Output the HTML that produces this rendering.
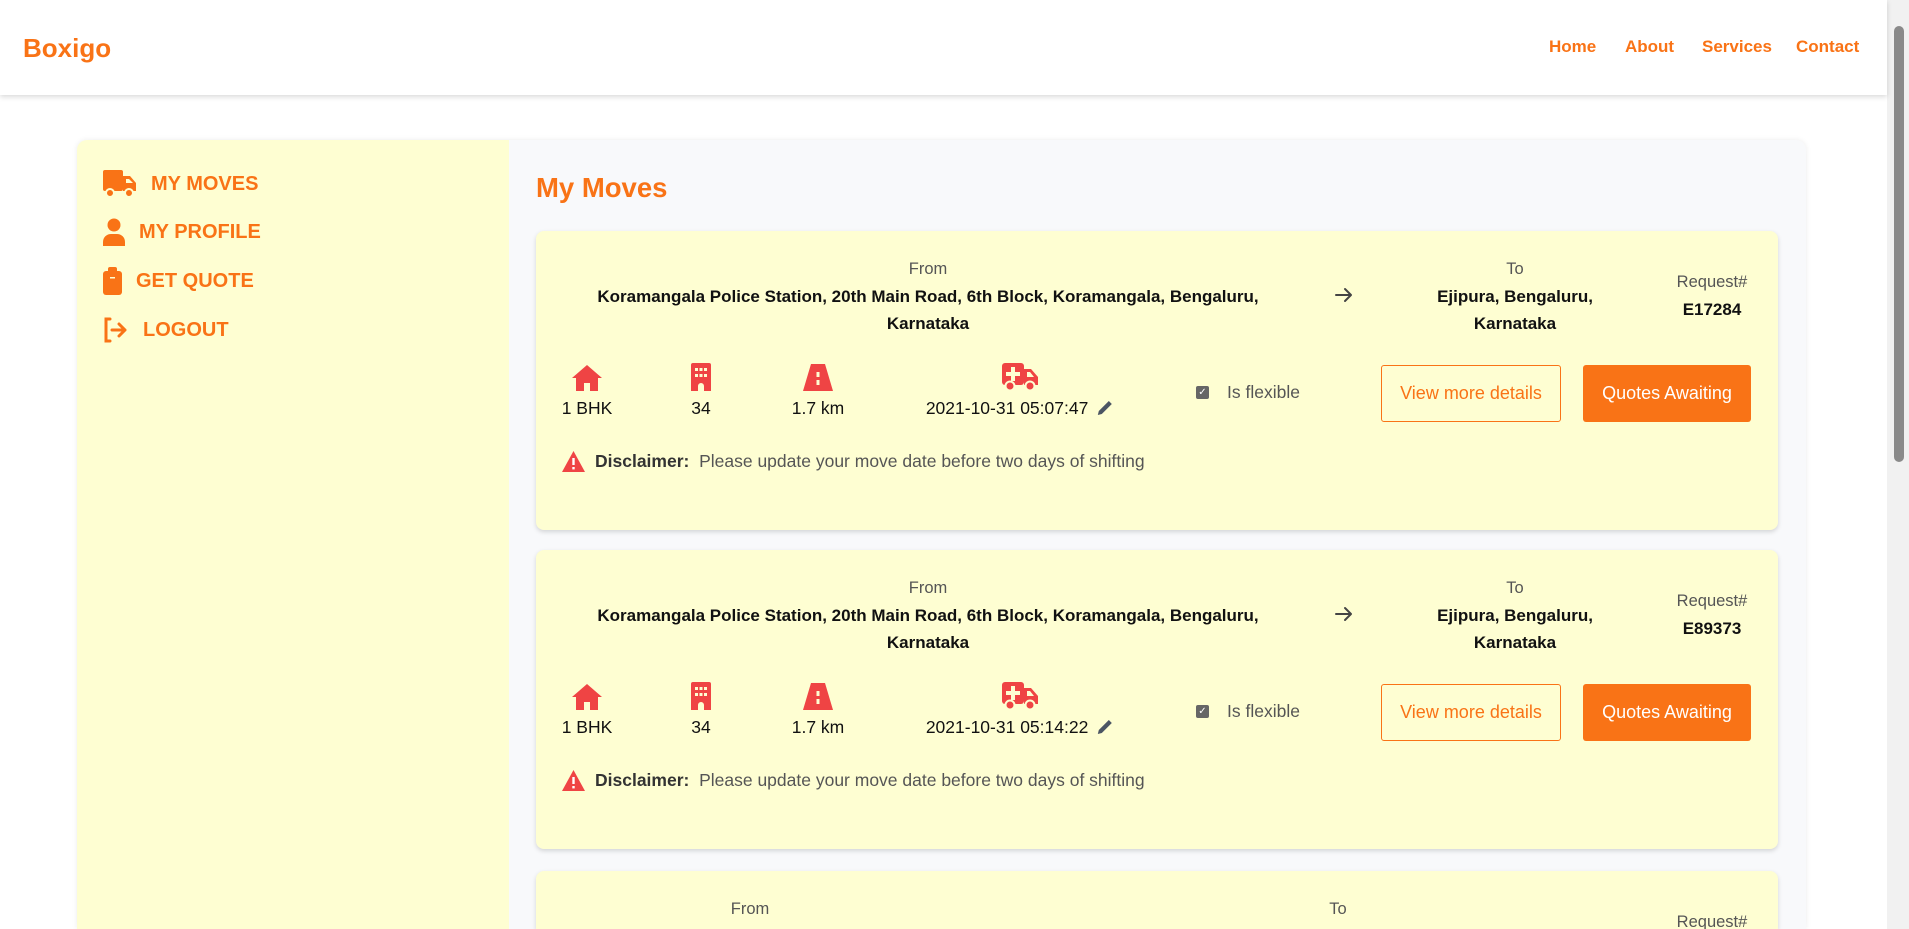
<!DOCTYPE html>
<html style="overflow:hidden;height:929px"><head><meta charset="utf-8"><style>
*{margin:0;padding:0;box-sizing:border-box}
body{width:1909px;height:929px;overflow:hidden;background:#fff;font-family:"Liberation Sans",sans-serif;position:relative}
.hdr{position:absolute;left:0;top:0;width:1887px;height:95px;background:#fff;box-shadow:0 2px 5px rgba(0,0,0,.15);z-index:2}
.logo{position:absolute;left:23px;top:33px;font-size:26px;font-weight:bold;color:#f97316}
.nav a{position:absolute;top:37px;font-size:17px;font-weight:bold;color:#f97316;text-decoration:none}
.sb{position:absolute;right:0;top:0;width:22px;height:929px;background:#f1f1f1}
.thumb{position:absolute;right:5px;top:26px;width:10px;height:436px;background:#8a8a8a;border-radius:5px}
.wrap{position:absolute;left:77px;top:140px;width:1729px;height:789px;background:#f8f9fb;border-radius:10px 10px 0 0;box-shadow:0 0 6px rgba(0,0,0,.08)}
.side{position:absolute;left:77px;top:140px;width:432px;height:789px;background:#fefed2;border-radius:10px 0 0 0}
.si{position:absolute;left:103px;font-size:20px;font-weight:bold;color:#f97316;display:flex;align-items:center}
.title{position:absolute;left:536px;top:172px;font-size:27.5px;font-weight:bold;color:#f97316}
.card{position:absolute;left:536px;width:1242px;height:299px;background:#fefed2;border-radius:8px;box-shadow:0 2px 5px rgba(0,0,0,.15);overflow:hidden}
.c{position:absolute;text-align:center;transform:translateX(-50%);white-space:nowrap}
.lab{font-size:16.5px;color:#555}
.b{font-size:17px;font-weight:bold;color:#111;line-height:27px}
.ic{position:absolute;transform:translateX(-50%)}
.val{font-size:17.5px;color:#111}
.btn{position:absolute;top:134px;height:57px;border-radius:3px;font-size:18px;display:flex;align-items:center;justify-content:center}
</style></head><body>
<div class="hdr"><div class="logo">Boxigo</div>
<div class="nav"><a style="left:1549px">Home</a><a style="left:1625px">About</a><a style="left:1702px">Services</a><a style="left:1796px">Contact</a></div></div>
<div class="wrap"></div>
<div class="side"></div>
<div class="si" style="top:170px"><svg width="34" height="28" viewBox="0 0 34 28"><rect x="0" y="0" width="20" height="21" rx="2" fill="#f97316"/><path d="M20 6h7l6 7v8H20z" fill="#f97316"/><path d="M23 9h3l4 4h-7z" fill="#fefed2"/><circle cx="7" cy="23" r="4" fill="#f97316" stroke="#fefed2" stroke-width="2"/><circle cx="26" cy="23" r="4" fill="#f97316" stroke="#fefed2" stroke-width="2"/></svg><span style="margin-left:14px">MY MOVES</span></div>
<div class="si" style="top:218px"><svg width="22" height="28" viewBox="0 0 22 28"><circle cx="11" cy="7" r="6.5" fill="#f97316"/><path d="M0 28v-4c0-5 4-8 8-8h6c4 0 8 3 8 8v4z" fill="#f97316"/></svg><span style="margin-left:14px">MY PROFILE</span></div>
<div class="si" style="top:267px"><svg width="19" height="28" viewBox="0 0 19 28"><rect x="0" y="4" width="19" height="24" rx="3" fill="#f97316"/><rect x="5" y="0" width="9" height="7" rx="2" fill="#f97316"/><rect x="7" y="10" width="5" height="1.5" fill="#fefed2"/></svg><span style="margin-left:14px">GET QUOTE</span></div>
<div class="si" style="top:317px"><svg width="24" height="26" viewBox="0 0 24 26"><path d="M7 2H3v22h4" fill="none" stroke="#f97316" stroke-width="3" stroke-linecap="round"/><path d="M9 13h13M16 7l6 6-6 6" fill="none" stroke="#f97316" stroke-width="3" stroke-linecap="round" stroke-linejoin="round"/></svg><span style="margin-left:16px">LOGOUT</span></div>
<div class="title">My Moves</div>

<div class="card" style="top:231px">
<div class="c lab" style="left:392px;top:29px">From</div>
<div class="c b" style="left:392px;top:52px">Koramangala Police Station, 20th Main Road, 6th Block, Koramangala, Bengaluru,<br>Karnataka</div>
<svg style="position:absolute;left:799px;top:56px" width="18" height="16" viewBox="0 0 18 16"><path d="M1 8h15M10 2l6 6-6 6" fill="none" stroke="#444" stroke-width="2" stroke-linecap="round" stroke-linejoin="round"/></svg>
<div class="c lab" style="left:979px;top:29px">To</div>
<div class="c b" style="left:979px;top:52px">Ejipura, Bengaluru,<br>Karnataka</div>
<div class="c lab" style="left:1176px;top:42px">Request#</div>
<div class="c b" style="left:1176px;top:65px">E17284</div>
<svg class="ic" style="left:51px;top:134px" width="30" height="26" viewBox="0 0 30 26"><path d="M15 0L0 13h4v13h8v-8h6v8h8V13h4z" fill="#ef4444"/></svg>
<svg class="ic" style="left:165px;top:132px" width="20" height="28" viewBox="0 0 20 28"><path d="M0 2a2 2 0 012-2h16a2 2 0 012 2v26h-7v-5a3 3 0 00-6 0v5H0z" fill="#ef4444"/><g fill="#fefed2"><rect x="4" y="5" width="3" height="3"/><rect x="8.5" y="5" width="3" height="3"/><rect x="13" y="5" width="3" height="3"/><rect x="4" y="11" width="3" height="3"/><rect x="8.5" y="11" width="3" height="3"/><rect x="13" y="11" width="3" height="3"/></g></svg>
<svg class="ic" style="left:282px;top:133px" width="30" height="27" viewBox="0 0 30 27"><path d="M8 0h14l8 27H0z" fill="#ef4444"/><rect x="13.5" y="8" width="3" height="5" fill="#fefed2"/><rect x="13.5" y="16" width="3" height="5" fill="#fefed2"/></svg>
<svg class="ic" style="left:484px;top:132px" width="36" height="29" viewBox="0 0 36 29"><rect x="0" y="0" width="22" height="22" rx="3" fill="#ef4444"/><path d="M22 6h7l7 8v8H22z" fill="#ef4444"/><path d="M25 9h3l4 5h-7z" fill="#fefed2"/><path d="M9 4h4v5h5v4h-5v5H9v-5H4V9h5z" fill="#fefed2"/><circle cx="8" cy="23" r="4.5" fill="#ef4444" stroke="#fefed2" stroke-width="2"/><circle cx="28" cy="23" r="4.5" fill="#ef4444" stroke="#fefed2" stroke-width="2"/></svg>
<div class="c val" style="left:51px;top:167px">1 BHK</div>
<div class="c val" style="left:165px;top:167px">34</div>
<div class="c val" style="left:282px;top:167px">1.7 km</div>
<div class="c val" style="left:484px;top:167px">2021-10-31 05:07:47 <svg width="17" height="17" viewBox="0 0 17 17" style="vertical-align:-2px;margin-left:4px"><path d="M1 16l1-4L12 2l3 3L5 15z" fill="#4b5563"/></svg></div>
<div style="position:absolute;left:660px;top:155px;width:13px;height:13px;background:#666;border-radius:2px;color:#fff;font-size:10px;line-height:13px;text-align:center">&#10003;</div>
<div style="position:absolute;left:691px;top:151px;font-size:17.5px;color:#555">Is flexible</div>
<div class="btn" style="left:845px;width:180px;border:1px solid #f97316;color:#f97316">View more details</div>
<div class="btn" style="left:1047px;width:168px;background:#f97316;color:#fff">Quotes Awaiting</div>
<svg style="position:absolute;left:26px;top:220px" width="23" height="21" viewBox="0 0 23 21"><path d="M11.5 0L23 21H0z" fill="#ef4444"/><rect x="10.3" y="7" width="2.4" height="7" fill="#fff"/><rect x="10.3" y="16" width="2.4" height="2.4" fill="#fff"/></svg>
<div style="position:absolute;left:59px;top:220px;font-size:17.5px;color:#555"><b style="color:#333">Disclaimer:</b>&nbsp; Please update your move date before two days of shifting</div>
</div>

<div class="card" style="top:550px">
<div class="c lab" style="left:392px;top:29px">From</div>
<div class="c b" style="left:392px;top:52px">Koramangala Police Station, 20th Main Road, 6th Block, Koramangala, Bengaluru,<br>Karnataka</div>
<svg style="position:absolute;left:799px;top:56px" width="18" height="16" viewBox="0 0 18 16"><path d="M1 8h15M10 2l6 6-6 6" fill="none" stroke="#444" stroke-width="2" stroke-linecap="round" stroke-linejoin="round"/></svg>
<div class="c lab" style="left:979px;top:29px">To</div>
<div class="c b" style="left:979px;top:52px">Ejipura, Bengaluru,<br>Karnataka</div>
<div class="c lab" style="left:1176px;top:42px">Request#</div>
<div class="c b" style="left:1176px;top:65px">E89373</div>
<svg class="ic" style="left:51px;top:134px" width="30" height="26" viewBox="0 0 30 26"><path d="M15 0L0 13h4v13h8v-8h6v8h8V13h4z" fill="#ef4444"/></svg>
<svg class="ic" style="left:165px;top:132px" width="20" height="28" viewBox="0 0 20 28"><path d="M0 2a2 2 0 012-2h16a2 2 0 012 2v26h-7v-5a3 3 0 00-6 0v5H0z" fill="#ef4444"/><g fill="#fefed2"><rect x="4" y="5" width="3" height="3"/><rect x="8.5" y="5" width="3" height="3"/><rect x="13" y="5" width="3" height="3"/><rect x="4" y="11" width="3" height="3"/><rect x="8.5" y="11" width="3" height="3"/><rect x="13" y="11" width="3" height="3"/></g></svg>
<svg class="ic" style="left:282px;top:133px" width="30" height="27" viewBox="0 0 30 27"><path d="M8 0h14l8 27H0z" fill="#ef4444"/><rect x="13.5" y="8" width="3" height="5" fill="#fefed2"/><rect x="13.5" y="16" width="3" height="5" fill="#fefed2"/></svg>
<svg class="ic" style="left:484px;top:132px" width="36" height="29" viewBox="0 0 36 29"><rect x="0" y="0" width="22" height="22" rx="3" fill="#ef4444"/><path d="M22 6h7l7 8v8H22z" fill="#ef4444"/><path d="M25 9h3l4 5h-7z" fill="#fefed2"/><path d="M9 4h4v5h5v4h-5v5H9v-5H4V9h5z" fill="#fefed2"/><circle cx="8" cy="23" r="4.5" fill="#ef4444" stroke="#fefed2" stroke-width="2"/><circle cx="28" cy="23" r="4.5" fill="#ef4444" stroke="#fefed2" stroke-width="2"/></svg>
<div class="c val" style="left:51px;top:167px">1 BHK</div>
<div class="c val" style="left:165px;top:167px">34</div>
<div class="c val" style="left:282px;top:167px">1.7 km</div>
<div class="c val" style="left:484px;top:167px">2021-10-31 05:14:22 <svg width="17" height="17" viewBox="0 0 17 17" style="vertical-align:-2px;margin-left:4px"><path d="M1 16l1-4L12 2l3 3L5 15z" fill="#4b5563"/></svg></div>
<div style="position:absolute;left:660px;top:155px;width:13px;height:13px;background:#666;border-radius:2px;color:#fff;font-size:10px;line-height:13px;text-align:center">&#10003;</div>
<div style="position:absolute;left:691px;top:151px;font-size:17.5px;color:#555">Is flexible</div>
<div class="btn" style="left:845px;width:180px;border:1px solid #f97316;color:#f97316">View more details</div>
<div class="btn" style="left:1047px;width:168px;background:#f97316;color:#fff">Quotes Awaiting</div>
<svg style="position:absolute;left:26px;top:220px" width="23" height="21" viewBox="0 0 23 21"><path d="M11.5 0L23 21H0z" fill="#ef4444"/><rect x="10.3" y="7" width="2.4" height="7" fill="#fff"/><rect x="10.3" y="16" width="2.4" height="2.4" fill="#fff"/></svg>
<div style="position:absolute;left:59px;top:220px;font-size:17.5px;color:#555"><b style="color:#333">Disclaimer:</b>&nbsp; Please update your move date before two days of shifting</div>
</div>

<div class="card" style="top:871px;height:58px;border-radius:8px 8px 0 0">
<div class="c lab" style="left:214px;top:29px">From</div>
<div class="c lab" style="left:802px;top:29px">To</div>
<div class="c lab" style="left:1176px;top:42px">Request#</div>
</div>
<div class="sb"><div class="thumb"></div></div>
</body></html>
